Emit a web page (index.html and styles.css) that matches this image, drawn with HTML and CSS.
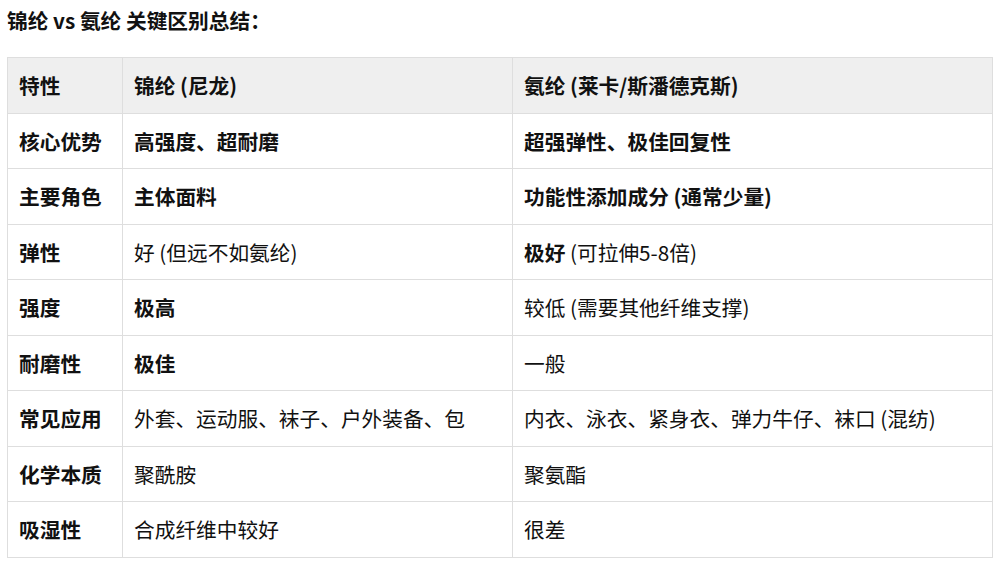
FILE: index.html
```html
<!DOCTYPE html>
<html lang="zh-CN">
<head>
<meta charset="utf-8">
<title>锦纶 vs 氨纶 关键区别总结</title>
<link rel="stylesheet" href="styles.css">
</head>
<body>
<div class="page">
  <h3 class="title">锦纶 vs 氨纶 关键区别总结：</h3>
  <table class="cmp">
    <colgroup>
      <col class="c1">
      <col class="c2">
      <col class="c3">
    </colgroup>
    <thead>
      <tr><th>特性</th><th>锦纶 (尼龙)</th><th>氨纶 (莱卡/斯潘德克斯)</th></tr>
    </thead>
    <tbody>
      <tr><td><b>核心优势</b></td><td><b>高强度、超耐磨</b></td><td><b>超强弹性、极佳回复性</b></td></tr>
      <tr><td><b>主要角色</b></td><td><b>主体面料</b></td><td><b>功能性添加成分 (通常少量)</b></td></tr>
      <tr><td><b>弹性</b></td><td>好 (但远不如氨纶)</td><td><b>极好</b> (可拉伸5-8倍)</td></tr>
      <tr><td><b>强度</b></td><td><b>极高</b></td><td>较低 (需要其他纤维支撑)</td></tr>
      <tr><td><b>耐磨性</b></td><td><b>极佳</b></td><td>一般</td></tr>
      <tr><td><b>常见应用</b></td><td>外套、运动服、袜子、户外装备、包</td><td>内衣、泳衣、紧身衣、弹力牛仔、袜口 (混纺)</td></tr>
      <tr><td><b>化学本质</b></td><td>聚酰胺</td><td>聚氨酯</td></tr>
      <tr><td><b>吸湿性</b></td><td>合成纤维中较好</td><td>很差</td></tr>
    </tbody>
  </table>
</div>
</body>
</html>
```

FILE: styles.css
```css
html, body {
  margin: 0;
  padding: 0;
  background: #ffffff;
}

body {
  font-family: "Microsoft YaHei", "Noto Sans CJK SC", "Noto Sans", sans-serif;
  color: #111111;
  font-size: 20.7px;
}

.page {
  padding: 4px 7px 0 7px;
}

.title {
  margin: 0 0 21px 0;
  font-size: 20.7px;
  font-weight: 700;
  line-height: 32px;
}

.cmp {
  width: 986px;
  border-collapse: collapse;
  table-layout: fixed;
}

.c1 { width: 115px; }
.c2 { width: 390px; }

.cmp th,
.cmp td {
  border: 1px solid #dedede;
  padding: 12px 11px;
  line-height: 30.5px;
  height: 30.5px;
  text-align: left;
  vertical-align: middle;
  white-space: nowrap;
}

.cmp th {
  background: #efefef;
  font-weight: 700;
}

.cmp td {
  font-weight: 400;
}

.cmp b {
  font-weight: 700;
}
```
